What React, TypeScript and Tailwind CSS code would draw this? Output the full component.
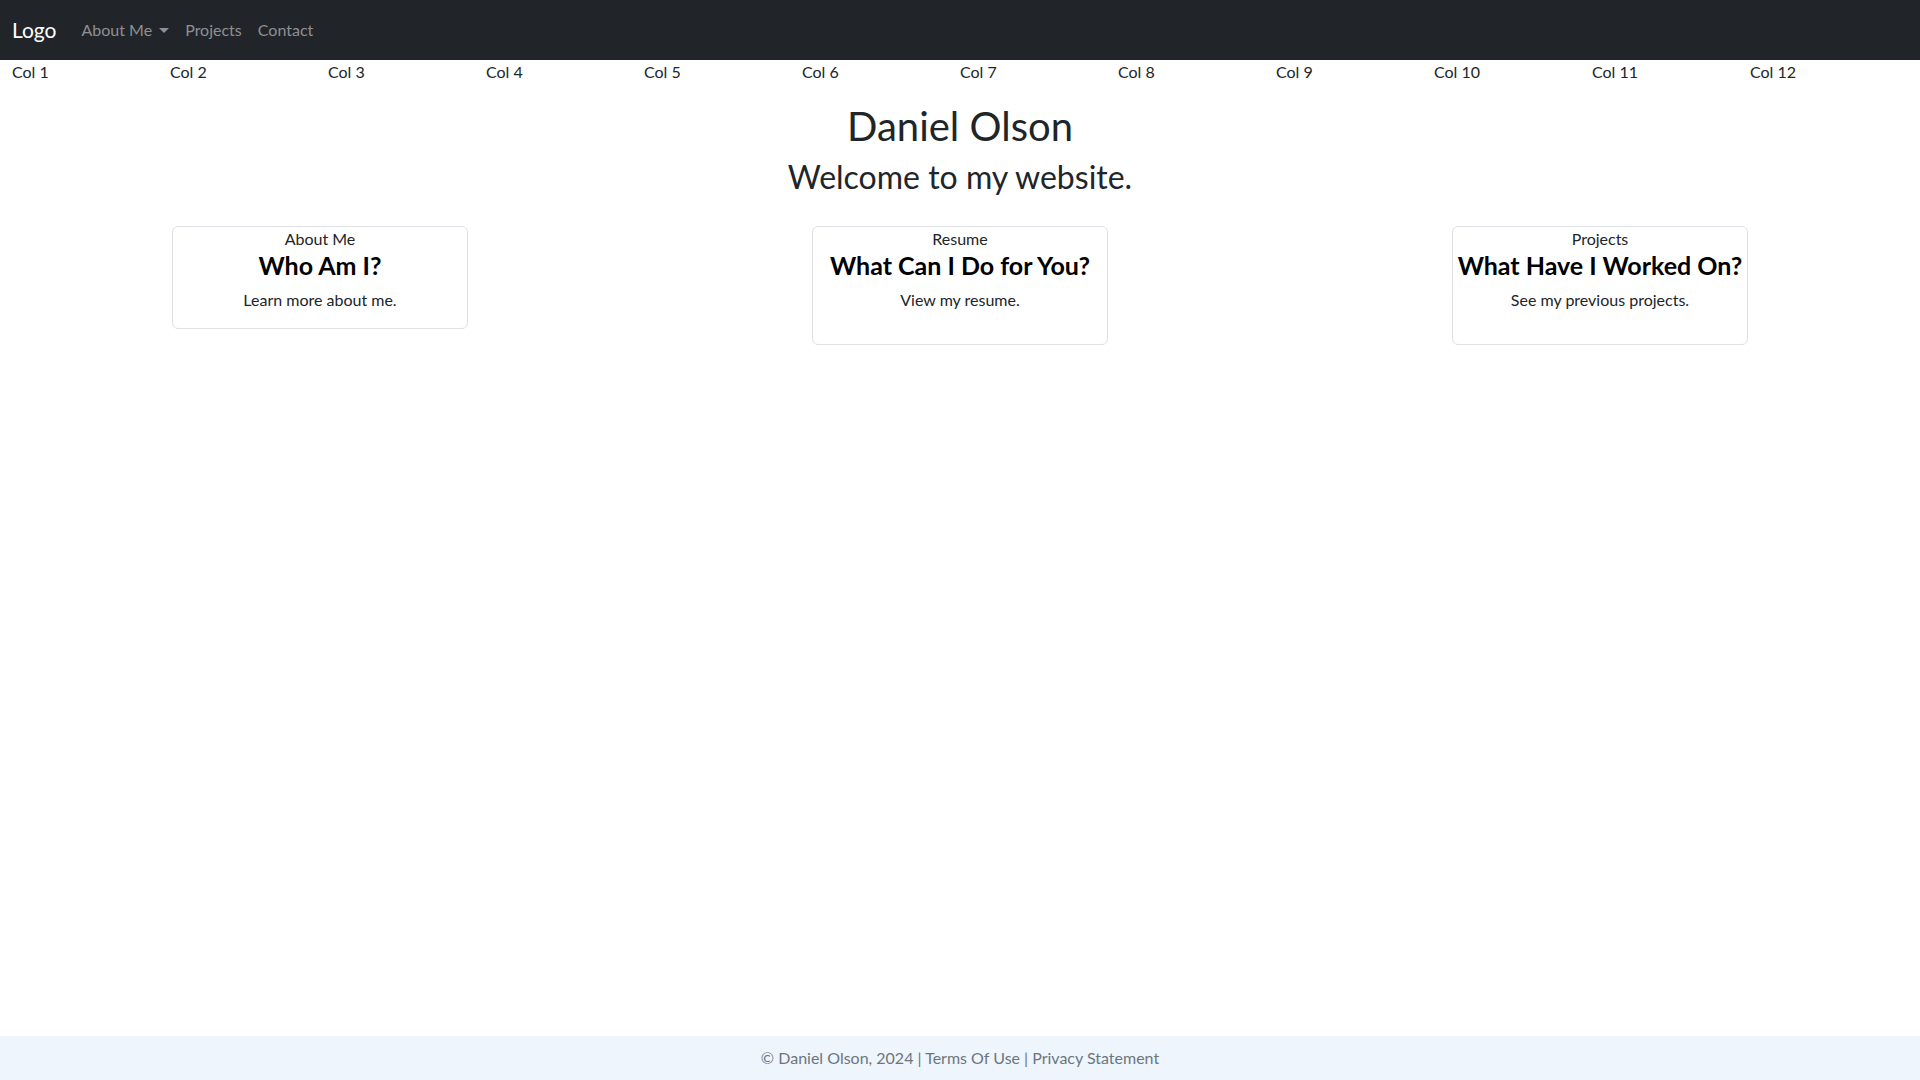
import React from "react";

const cols = Array.from({ length: 12 }, (_, i) => `Col ${i + 1}`);

const cards = [
  { label: "About Me", title: "Who Am I?", text: "Learn more about me.", extra: false },
  { label: "Resume", title: "What Can I Do for You?", text: "View my resume.", extra: true },
  { label: "Projects", title: "What Have I Worked On?", text: "See my previous projects.", extra: true },
];

const Card = ({ label, title, text, extra }: (typeof cards)[number]) => (
  <div className="mx-auto w-[296px] rounded-[6px] border border-[#dee2e6] bg-white text-center">
    <div className="text-[16px] leading-6 text-[#212529]">{label}</div>
    <h4 className="mb-2 whitespace-nowrap text-[25px] font-bold leading-[29px] text-black">{title}</h4>
    <p className={extra ? "mb-8 text-[16px] leading-6 text-[#212529]" : "mb-4 text-[16px] leading-6 text-[#212529]"}>
      {text}
    </p>
  </div>
);

export default function App() {
  return (
    <div
      className="flex min-h-screen flex-col bg-white text-[#212529]"
      style={{ fontFamily: '"Segoe UI", Lato, "Noto Sans", sans-serif' }}
    >
      <nav className="flex h-[60px] items-center bg-[#212529] px-3">
        <span className="mr-[17px] py-[5px] text-[21px] leading-[30px] text-white">Logo</span>
        <div className="flex items-center text-[16px] leading-6 text-[#8e9092]">
          <span className="flex items-center px-2">
            About Me
            <span className="ml-[7px] inline-block h-0 w-0 border-x-[5px] border-t-[5px] border-x-transparent border-t-[#8e9092]" />
          </span>
          <span className="px-2">Projects</span>
          <span className="px-2">Contact</span>
        </div>
      </nav>

      <main className="flex-1">
        <div className="grid grid-cols-12 px-3 text-[16px] leading-6">
          {cols.map((c) => (
            <div key={c}>{c}</div>
          ))}
        </div>

        <div className="mt-[18px] text-center">
          <h1 className="mb-2 text-[40px] leading-[1.2]">Daniel Olson</h1>
          <h2 className="mb-2 text-[32px] leading-[1.2]">Welcome to my website.</h2>
        </div>

        <div className="mt-[30px] grid grid-cols-3 items-start">
          {cards.map((c) => (
            <Card key={c.label} {...c} />
          ))}
        </div>
      </main>

      <footer className="flex h-[44px] items-center justify-center bg-[#eef5fd] text-[16px] text-[#6c757d]">
        © Daniel Olson, 2024 | Terms Of Use | Privacy Statement
      </footer>
    </div>
  );
}
